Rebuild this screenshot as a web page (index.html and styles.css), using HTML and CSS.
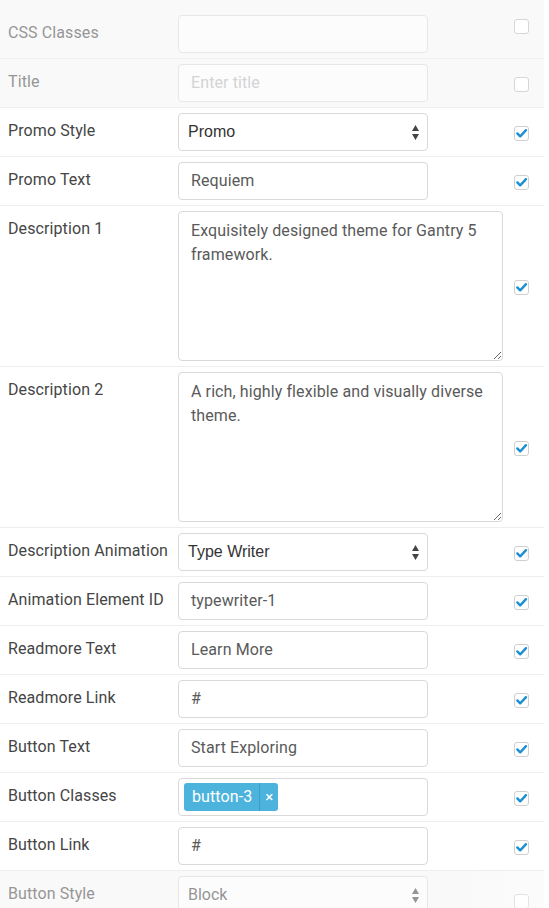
FILE: index.html
```html
<!DOCTYPE html>
<html>
<head>
<meta charset="utf-8">
<link rel="stylesheet" href="styles.css">
</head>
<body>
<div class="panel">
  <div class="row row-first faded">
    <div class="label">CSS Classes</div>
    <div class="field"><div class="input"></div></div>
    <span class="check check-top"></span>
  </div>
  <div class="row faded">
    <div class="label">Title</div>
    <div class="field"><div class="input placeholder">Enter title</div></div>
    <span class="check"></span>
  </div>
  <div class="row">
    <div class="label">Promo Style</div>
    <div class="field"><div class="select">Promo<span class="arrows"><svg width="7" height="15" viewBox="0 0 7 15"><path d="M3.5 0 L7 6 L0 6 Z M0 9 L7 9 L3.5 15 Z" fill="#444"/></svg></span></div></div>
    <span class="check on"><svg width="15" height="15" viewBox="0 0 15 15"><path d="M3.3 7.4 L6.2 10.3 L12 4.2" fill="none" stroke="#1b8fd2" stroke-width="2.4" stroke-linecap="round" stroke-linejoin="round"/></svg></span>
  </div>
  <div class="row">
    <div class="label">Promo Text</div>
    <div class="field"><div class="input">Requiem</div></div>
    <span class="check on"><svg width="15" height="15" viewBox="0 0 15 15"><path d="M3.3 7.4 L6.2 10.3 L12 4.2" fill="none" stroke="#1b8fd2" stroke-width="2.4" stroke-linecap="round" stroke-linejoin="round"/></svg></span>
  </div>
  <div class="row">
    <div class="label">Description 1</div>
    <div class="field wide"><textarea class="textarea">Exquisitely designed theme for Gantry 5 framework.</textarea></div>
    <span class="check on"><svg width="15" height="15" viewBox="0 0 15 15"><path d="M3.3 7.4 L6.2 10.3 L12 4.2" fill="none" stroke="#1b8fd2" stroke-width="2.4" stroke-linecap="round" stroke-linejoin="round"/></svg></span>
  </div>
  <div class="row">
    <div class="label">Description 2</div>
    <div class="field wide"><textarea class="textarea">A rich, highly flexible and visually diverse theme.</textarea></div>
    <span class="check on"><svg width="15" height="15" viewBox="0 0 15 15"><path d="M3.3 7.4 L6.2 10.3 L12 4.2" fill="none" stroke="#1b8fd2" stroke-width="2.4" stroke-linecap="round" stroke-linejoin="round"/></svg></span>
  </div>
  <div class="row">
    <div class="label">Description Animation</div>
    <div class="field"><div class="select">Type Writer<span class="arrows"><svg width="7" height="15" viewBox="0 0 7 15"><path d="M3.5 0 L7 6 L0 6 Z M0 9 L7 9 L3.5 15 Z" fill="#444"/></svg></span></div></div>
    <span class="check on"><svg width="15" height="15" viewBox="0 0 15 15"><path d="M3.3 7.4 L6.2 10.3 L12 4.2" fill="none" stroke="#1b8fd2" stroke-width="2.4" stroke-linecap="round" stroke-linejoin="round"/></svg></span>
  </div>
  <div class="row">
    <div class="label">Animation Element ID</div>
    <div class="field"><div class="input">typewriter-1</div></div>
    <span class="check on"><svg width="15" height="15" viewBox="0 0 15 15"><path d="M3.3 7.4 L6.2 10.3 L12 4.2" fill="none" stroke="#1b8fd2" stroke-width="2.4" stroke-linecap="round" stroke-linejoin="round"/></svg></span>
  </div>
  <div class="row">
    <div class="label">Readmore Text</div>
    <div class="field"><div class="input">Learn More</div></div>
    <span class="check on"><svg width="15" height="15" viewBox="0 0 15 15"><path d="M3.3 7.4 L6.2 10.3 L12 4.2" fill="none" stroke="#1b8fd2" stroke-width="2.4" stroke-linecap="round" stroke-linejoin="round"/></svg></span>
  </div>
  <div class="row">
    <div class="label">Readmore Link</div>
    <div class="field"><div class="input">#</div></div>
    <span class="check on"><svg width="15" height="15" viewBox="0 0 15 15"><path d="M3.3 7.4 L6.2 10.3 L12 4.2" fill="none" stroke="#1b8fd2" stroke-width="2.4" stroke-linecap="round" stroke-linejoin="round"/></svg></span>
  </div>
  <div class="row">
    <div class="label">Button Text</div>
    <div class="field"><div class="input">Start Exploring</div></div>
    <span class="check on"><svg width="15" height="15" viewBox="0 0 15 15"><path d="M3.3 7.4 L6.2 10.3 L12 4.2" fill="none" stroke="#1b8fd2" stroke-width="2.4" stroke-linecap="round" stroke-linejoin="round"/></svg></span>
  </div>
  <div class="row">
    <div class="label">Button Classes</div>
    <div class="field"><div class="input tags"><span class="tag"><span class="tag-text">button-3</span><span class="tag-x">×</span></span></div></div>
    <span class="check on"><svg width="15" height="15" viewBox="0 0 15 15"><path d="M3.3 7.4 L6.2 10.3 L12 4.2" fill="none" stroke="#1b8fd2" stroke-width="2.4" stroke-linecap="round" stroke-linejoin="round"/></svg></span>
  </div>
  <div class="row">
    <div class="label">Button Link</div>
    <div class="field"><div class="input">#</div></div>
    <span class="check on"><svg width="15" height="15" viewBox="0 0 15 15"><path d="M3.3 7.4 L6.2 10.3 L12 4.2" fill="none" stroke="#1b8fd2" stroke-width="2.4" stroke-linecap="round" stroke-linejoin="round"/></svg></span>
  </div>
  <div class="row row-last faded">
    <div class="label">Button Style</div>
    <div class="field"><div class="select select-faded">Block<span class="arrows"><svg width="7" height="15" viewBox="0 0 7 15"><path d="M3.5 0 L7 6 L0 6 Z M0 9 L7 9 L3.5 15 Z" fill="#444"/></svg></span></div></div>
    <span class="check"></span>
  </div>
</div>
</body>
</html>
```

FILE: styles.css
```css
html, body {
  margin: 0;
  padding: 0;
  background: #ffffff;
}
body {
  font-family: Roboto, "Liberation Sans", sans-serif;
  font-size: 16px;
  letter-spacing: 0.1px;
}
.panel {
  width: 544px;
  overflow: hidden;
}
.row {
  position: relative;
  display: flex;
  align-items: flex-start;
  padding: 5px 0 5px 8px;
  border-bottom: 1px solid #eeeeee;
  background: #ffffff;
}
.row-first {
  padding-top: 15px;
}
.row.faded {
  background: #f9f9f9;
  border-bottom-color: #f0f0f0;
}
.row.faded > .label,
.row.faded > .field {
  opacity: 0.55;
}
.row.faded > .check {
  border-color: #d6d6d6;
}
.row-last {
  border-bottom: none;
  height: 60px;
  background: linear-gradient(#f8f8f8, #f0f0f0);
}
.row-last::after {
  content: "";
  position: absolute;
  top: 0;
  right: 0;
  bottom: 0;
  width: 90px;
  background: linear-gradient(to right, rgba(255,255,255,0), rgba(255,255,255,0.45));
}
.label {
  width: 170px;
  flex: none;
  line-height: 36px;
  color: #454545;
  white-space: nowrap;
}
.field {
  width: 250px;
  flex: none;
}
.field.wide {
  width: 325px;
}
.input, .select {
  box-sizing: border-box;
  height: 38px;
  border: 1px solid #d9d9d9;
  border-radius: 4px;
  background: #ffffff;
  line-height: 36px;
  padding: 0 12px;
  color: #5a5a5a;
  white-space: nowrap;
}
.placeholder {
  color: #b5b5b5;
}
.select {
  position: relative;
  padding: 0 9px;
  font-family: "Liberation Sans", Arial, sans-serif;
  letter-spacing: 0;
  color: #333333;
}
.select-faded {
  font-family: Roboto, sans-serif;
  color: #444444;
}
.arrows {
  position: absolute;
  right: 8px;
  top: 11px;
  line-height: 0;
}
.textarea {
  display: block;
  box-sizing: border-box;
  width: 325px;
  height: 150px;
  margin: 0;
  border: 1px solid #d9d9d9;
  border-radius: 4px;
  padding: 7px 12px 6px;
  font-family: Roboto, sans-serif;
  font-size: 16px;
  letter-spacing: 0.1px;
  line-height: 24px;
  color: #5a5a5a;
  background: #ffffff;
  outline: none;
}
.tags {
  padding: 4px 5px;
  line-height: 0;
}
.tag {
  display: inline-flex;
  height: 28px;
  background: #4cb3dc;
  border-radius: 3px;
  color: #ffffff;
  line-height: 28px;
}
.tag-text {
  padding: 0 7px 0 8px;
}
.tag-x {
  border-left: 1px solid #3d9cc4;
  padding: 0 5px 0 5px;
  font-size: 15px;
}
.check {
  flex: none;
  box-sizing: border-box;
  width: 15px;
  height: 15px;
  margin-left: auto;
  margin-right: 15px;
  margin-top: 2px;
  align-self: center;
  border: 1px solid #cfcfcf;
  border-radius: 3px;
  background: #ffffff;
  position: relative;
}
.check svg {
  position: absolute;
  left: -1px;
  top: -1px;
}
.check-top {
  align-self: flex-start;
  margin-top: 4px;
}
.row-last .check {
  align-self: flex-start;
  margin-top: 18px;
}
```
